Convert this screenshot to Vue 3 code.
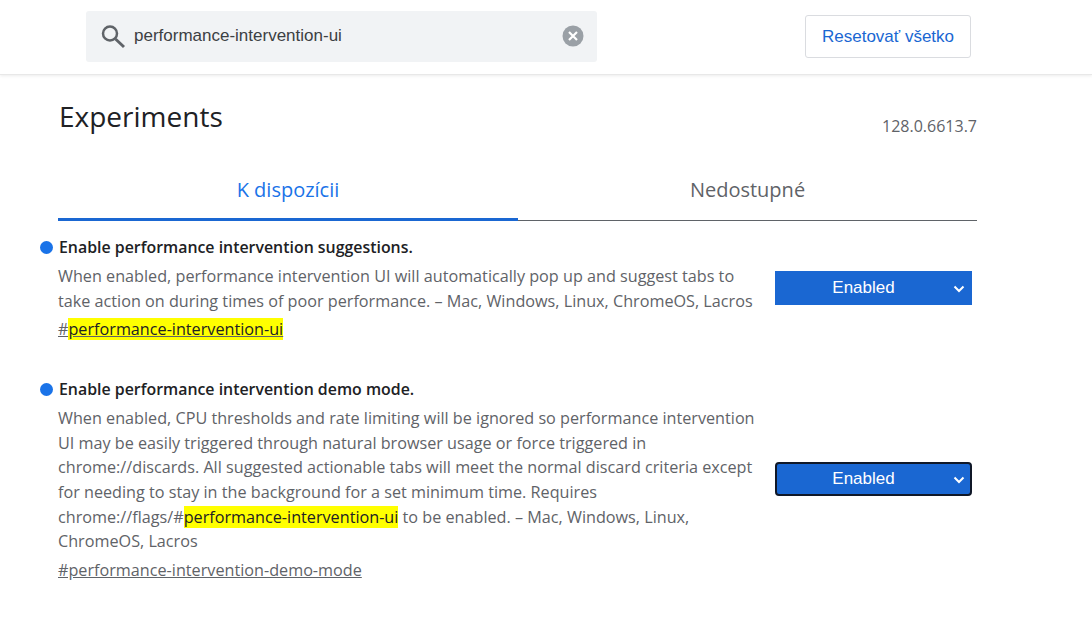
<script setup>
const q = 'performance-intervention-ui'
</script>

<template>
  <div class="page">
    <header class="top">
      <div class="search">
        <svg class="mag" width="28" height="28" viewBox="0 0 28 28" fill="none" stroke="#5f6368">
          <circle cx="10" cy="10.500" r="7" stroke-width="2.500" />
          <path d="M15.500 16l8.500 8" stroke-width="3" />
        </svg>
        <span class="query">{{ q }}</span>
        <svg class="clear" width="22" height="22" viewBox="0 0 22 22">
          <circle cx="11" cy="11" r="10.500" fill="#9aa0a6" />
          <path d="M7 7l8 8M15 7l-8 8" stroke="#fff" stroke-width="2.200" />
        </svg>
      </div>
      <button class="reset">Resetovať všetko</button>
    </header>

    <main class="content">
      <div class="title-row">
        <h1>Experiments</h1>
        <span class="version">128.0.6613.7</span>
      </div>
      <div class="tabs">
        <div class="tab active">K dispozícii</div>
        <div class="tab">Nedostupné</div>
      </div>

      <section class="flag first">
        <div class="text">
          <h2><span class="dot"></span>Enable performance intervention suggestions.</h2>
          <p>When enabled, performance intervention UI will automatically pop up and suggest tabs to take action on during times of poor performance. – Mac, Windows, Linux, ChromeOS, Lacros</p>
          <a class="link">#<mark>{{ q }}</mark></a>
        </div>
        <div class="select">Enabled<svg class="chev" width="12" height="8" viewBox="0 0 12 8"><path d="M1.500 1.500L6 6l4.500-4.500" fill="none" stroke="#fff" stroke-width="2" /></svg></div>
      </section>

      <section class="flag second">
        <div class="text">
          <h2><span class="dot"></span>Enable performance intervention demo mode.</h2>
          <p>When enabled, CPU thresholds and rate limiting will be ignored so performance intervention UI may be easily triggered through natural browser usage or force triggered in chrome://discards. All suggested actionable tabs will meet the normal discard criteria except for needing to stay in the background for a set minimum time. Requires chrome://flags/#<mark>{{ q }}</mark> to be enabled. – Mac, Windows, Linux, ChromeOS, Lacros</p>
          <a class="link">#performance-intervention-demo-mode</a>
        </div>
        <div class="select focus">Enabled<svg class="chev" width="12" height="8" viewBox="0 0 12 8"><path d="M1.500 1.500L6 6l4.500-4.500" fill="none" stroke="#fff" stroke-width="2" /></svg></div>
      </section>
    </main>
  </div>
</template>

<style scoped>
.page {
  width: 1092px;
  height: 620px;
  overflow: hidden;
  background: #fff;
  font-family: "Open Sans", "Noto Sans", sans-serif;
  color: #202124;
}
.top {
  height: 75px;
  box-sizing: border-box;
  display: flex;
  align-items: flex-start;
  padding: 11px 121px 0 86px;
  justify-content: space-between;
  border-bottom: 1px solid #e8e8e8;
  box-shadow: 0 1px 3px rgba(0, 0, 0, 0.08);
}
.search {
  width: 511px;
  height: 51px;
  box-sizing: border-box;
  background: #f1f3f5;
  border-radius: 3px;
  display: flex;
  align-items: center;
  padding: 0 13px 0 14px;
  font-family: "Liberation Sans", Arial, sans-serif;
  font-size: 17px;
}
.mag { flex: none; margin-right: 6px; margin-top: 1px; }
.query { flex: 1; color: #3c4043; margin-top: -2px; }
.clear { flex: none; margin-top: -1px; }
.reset {
  width: 166px;
  height: 43px;
  margin-top: 4px;
  background: #fff;
  border: 1px solid #dadce0;
  border-radius: 3px;
  color: #1a67d2;
  font-family: "Liberation Sans", Arial, sans-serif;
  font-size: 17px;
  padding: 0;
}
.content {
  width: 919px;
  margin-left: 58px;
}
.title-row {
  display: flex;
  justify-content: space-between;
  align-items: flex-end;
  height: 61px;
}
h1 {
  margin: 0 0 0 1px;
  font-size: 28px;
  font-weight: 400;
  line-height: 40px;
  align-self: flex-start;
  padding-top: 21px;
}
.version { font-size: 16px; color: #5f6368; line-height: 20px; }
.tabs {
  display: grid;
  grid-template-columns: 460px 459px;
  margin-top: 20px;
  border-bottom: 1px solid #5f6368;
  height: 64px;
}
.tab {
  text-align: center;
  font-size: 20px;
  line-height: 26px;
  padding-top: 21px;
  color: #5f6368;
}
.tab.active {
  color: #1a73e8;
  border-bottom: 3px solid #1a67d2;
  height: 41px;
  margin-bottom: -1px;
}
.flag {
  display: flex;
  align-items: center;
  justify-content: space-between;
}
.first { margin-top: 14px; }
.second { margin-top: 36px; }
.text { width: 700px; }
h2 {
  position: relative;
  margin: 0 0 5px;
  padding-left: 1px;
  font-size: 15.900px;
  font-weight: 600;
  line-height: 24px;
}
.dot {
  position: absolute;
  left: -18px;
  top: 6px;
  width: 13px;
  height: 13px;
  border-radius: 50%;
  background: #1a73e8;
}
p {
  margin: 0;
  font-size: 16.200px;
  line-height: 24.600px;
  color: #5f6368;
}
.link {
  display: block;
  margin-top: 4px;
  font-size: 16.200px;
  line-height: 24px;
  color: #5f6368;
  text-decoration: underline;
}
mark { background: #ff0; color: #202124; }
.select {
  position: relative;
  width: 197px;
  height: 34px;
  margin-right: 5px;
  box-sizing: border-box;
  background: #1a67d2;
  color: #fff;
  font-family: "Liberation Sans", Arial, sans-serif;
  font-size: 17px;
  line-height: 33px;
  text-align: center;
  padding-right: 20px;
}
.select.focus {
  border: 2px solid #101828;
  border-radius: 4px;
  line-height: 30px;
  padding-right: 20px;
  margin-top: -1px;
}
.chev { position: absolute; right: 7px; top: 14px; }
.focus .chev { right: 5px; top: 12px; }
</style>
